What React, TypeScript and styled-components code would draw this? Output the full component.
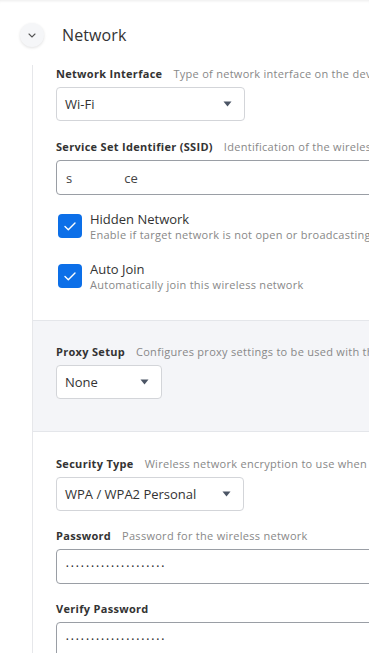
import { createGlobalStyle, styled } from "styled-components";

const GlobalStyle = createGlobalStyle`
  html, body {
    margin: 0;
    padding: 0;
    background: #fff;
    font-family: "Open Sans", "Liberation Sans", sans-serif;
    color: #333;
  }
`;

type FieldProps = {
  label: string;
  hint?: string;
  children: React.ReactNode;
};

const Field = ({ label, hint, children }: FieldProps) => (
  <FieldBox>
    <LabelRow>
      <Label>{label}</Label>
      {hint && <Hint>{hint}</Hint>}
    </LabelRow>
    {children}
  </FieldBox>
);

const Select = ({ value, width }: { value: string; width: number }) => (
  <SelectBox $width={width}>
    <span>{value}</span>
    <svg width="9" height="6" viewBox="0 0 9 6">
      <path d="M0.5 0.5h8L4.5 5.5z" fill="#4b5565" />
    </svg>
  </SelectBox>
);

const Check = ({ title, text }: { title: string; text: string }) => (
  <CheckRow>
    <CheckBox>
      <svg width="12" height="9" viewBox="0 0 12 9">
        <path
          d="M1 4.6l3.3 3.2L11 1"
          fill="none"
          stroke="#fff"
          strokeWidth="1.4"
          strokeLinecap="round"
          strokeLinejoin="round"
        />
      </svg>
    </CheckBox>
    <CheckText>
      <CheckTitle>{title}</CheckTitle>
      <CheckHint>{text}</CheckHint>
    </CheckText>
  </CheckRow>
);

const Dots = () => <DotsText>{"•".repeat(20)}</DotsText>;

export default function App() {
  return (
    <Page>
      <GlobalStyle />
      <Header>
        <Toggle>
          <svg width="8" height="5" viewBox="0 0 8 5">
            <path
              d="M1 1l3 3 3-3"
              fill="none"
              stroke="#555"
              strokeWidth="1.1"
              strokeLinecap="round"
            />
          </svg>
        </Toggle>
        <Title>Network</Title>
      </Header>
      <Body>
        <Section $pad="2px 0 32px" $gap={19}>
          <Field label="Network Interface" hint="Type of network interface on the device">
            <Select value="Wi-Fi" width={189} />
          </Field>
          <Field label="Service Set Identifier (SSID)" hint="Identification of the wireless network">
            <TextInput>
              s<Blur />ce
            </TextInput>
          </Field>
          <Checks>
            <Check
              title="Hidden Network"
              text="Enable if target network is not open or broadcasting"
            />
            <Check
              title="Auto Join"
              text="Automatically join this wireless network"
            />
          </Checks>
        </Section>
        <Section $gray $pad="24px 0 32px" $gap={19}>
          <Field label="Proxy Setup" hint="Configures proxy settings to be used with this network">
            <Select value="None" width={106} />
          </Field>
        </Section>
        <Section $pad="25px 0 0" $gap={18}>
          <Field label="Security Type" hint="Wireless network encryption to use when connecting">
            <Select value="WPA / WPA2 Personal" width={188} />
          </Field>
          <Field label="Password" hint="Password for the wireless network">
            <TextInput>
              <Dots />
            </TextInput>
          </Field>
          <Field label="Verify Password">
            <TextInput>
              <Dots />
            </TextInput>
          </Field>
        </Section>
      </Body>
    </Page>
  );
}

const Page = styled.div`
  width: 369px;
  height: 653px;
  overflow: hidden;
  box-shadow: inset 0 3px 3px -2px rgba(0, 0, 0, 0.08);
`;

const Header = styled.div`
  display: flex;
  align-items: center;
  gap: 18px;
  padding: 23px 0 0 20px;
  height: 24px;
`;

const Toggle = styled.div`
  width: 24px;
  height: 24px;
  border-radius: 50%;
  background: #f5f6f8;
  box-shadow: 0 1px 3px rgba(0, 0, 0, 0.12);
  display: flex;
  align-items: center;
  justify-content: center;
`;

const Title = styled.div`
  font-size: 16px;
  color: #333;
  letter-spacing: 0.1px;
`;

const Body = styled.div`
  margin: 18px 0 0 32px;
  border-left: 1px solid #e6e7ea;
  height: 620px;
`;

const Section = styled.div<{ $gray?: boolean; $pad: string; $gap: number }>`
  padding: ${(p) => p.$pad};
  padding-left: 23px;
  display: flex;
  flex-direction: column;
  gap: ${(p) => p.$gap}px;
  background: ${(p) => (p.$gray ? "#f4f5f8" : "transparent")};
  border-top: ${(p) => (p.$gray ? "1px solid #e4e6ea" : "none")};
  border-bottom: ${(p) => (p.$gray ? "1px solid #e4e6ea" : "none")};
`;

const FieldBox = styled.div`
  display: flex;
  flex-direction: column;
  gap: 6px;
`;

const LabelRow = styled.div`
  display: flex;
  gap: 11px;
  white-space: nowrap;
  font-size: 11px;
  line-height: 14px;
`;

const Label = styled.span`
  font-weight: 700;
  color: #333;
  letter-spacing: 0.3px;
`;

const Hint = styled.span`
  color: #888;
  letter-spacing: 0.28px;
`;

const SelectBox = styled.div<{ $width: number }>`
  box-sizing: border-box;
  width: ${(p) => p.$width}px;
  height: 34px;
  border: 1px solid #d3d5d9;
  border-radius: 4px;
  background: #fff;
  display: flex;
  align-items: center;
  justify-content: space-between;
  padding: 0 12px 0 8px;
  font-size: 13px;
  color: #333;
  white-space: nowrap;
`;

const TextInput = styled.div`
  box-sizing: border-box;
  width: 400px;
  height: 35px;
  border: 1px solid #9a9ea5;
  border-radius: 4px;
  background: #fff;
  display: flex;
  align-items: center;
  padding: 0 9px;
  font-size: 13px;
  color: #444;
`;

const Blur = styled.span`
  display: inline-block;
  width: 52px;
`;

const DotsText = styled.span`
  font-size: 7px;
  letter-spacing: 2.4px;
  color: #333;
`;

const Checks = styled.div`
  display: flex;
  flex-direction: column;
  gap: 26px;
  padding-left: 2px;
`;

const CheckRow = styled.div`
  display: flex;
  align-items: flex-start;
  gap: 8px;
  height: 24px;
`;

const CheckBox = styled.div`
  width: 24px;
  height: 24px;
  border-radius: 4px;
  background: #0c6fe8;
  display: flex;
  align-items: center;
  justify-content: center;
  flex-shrink: 0;
`;

const CheckText = styled.div`
  display: flex;
  flex-direction: column;
  white-space: nowrap;
  margin-top: -4px;
`;

const CheckTitle = styled.span`
  font-size: 13px;
  line-height: 18px;
  color: #333;
`;

const CheckHint = styled.span`
  font-size: 11px;
  line-height: 14px;
  color: #888;
  letter-spacing: 0.28px;
`;
